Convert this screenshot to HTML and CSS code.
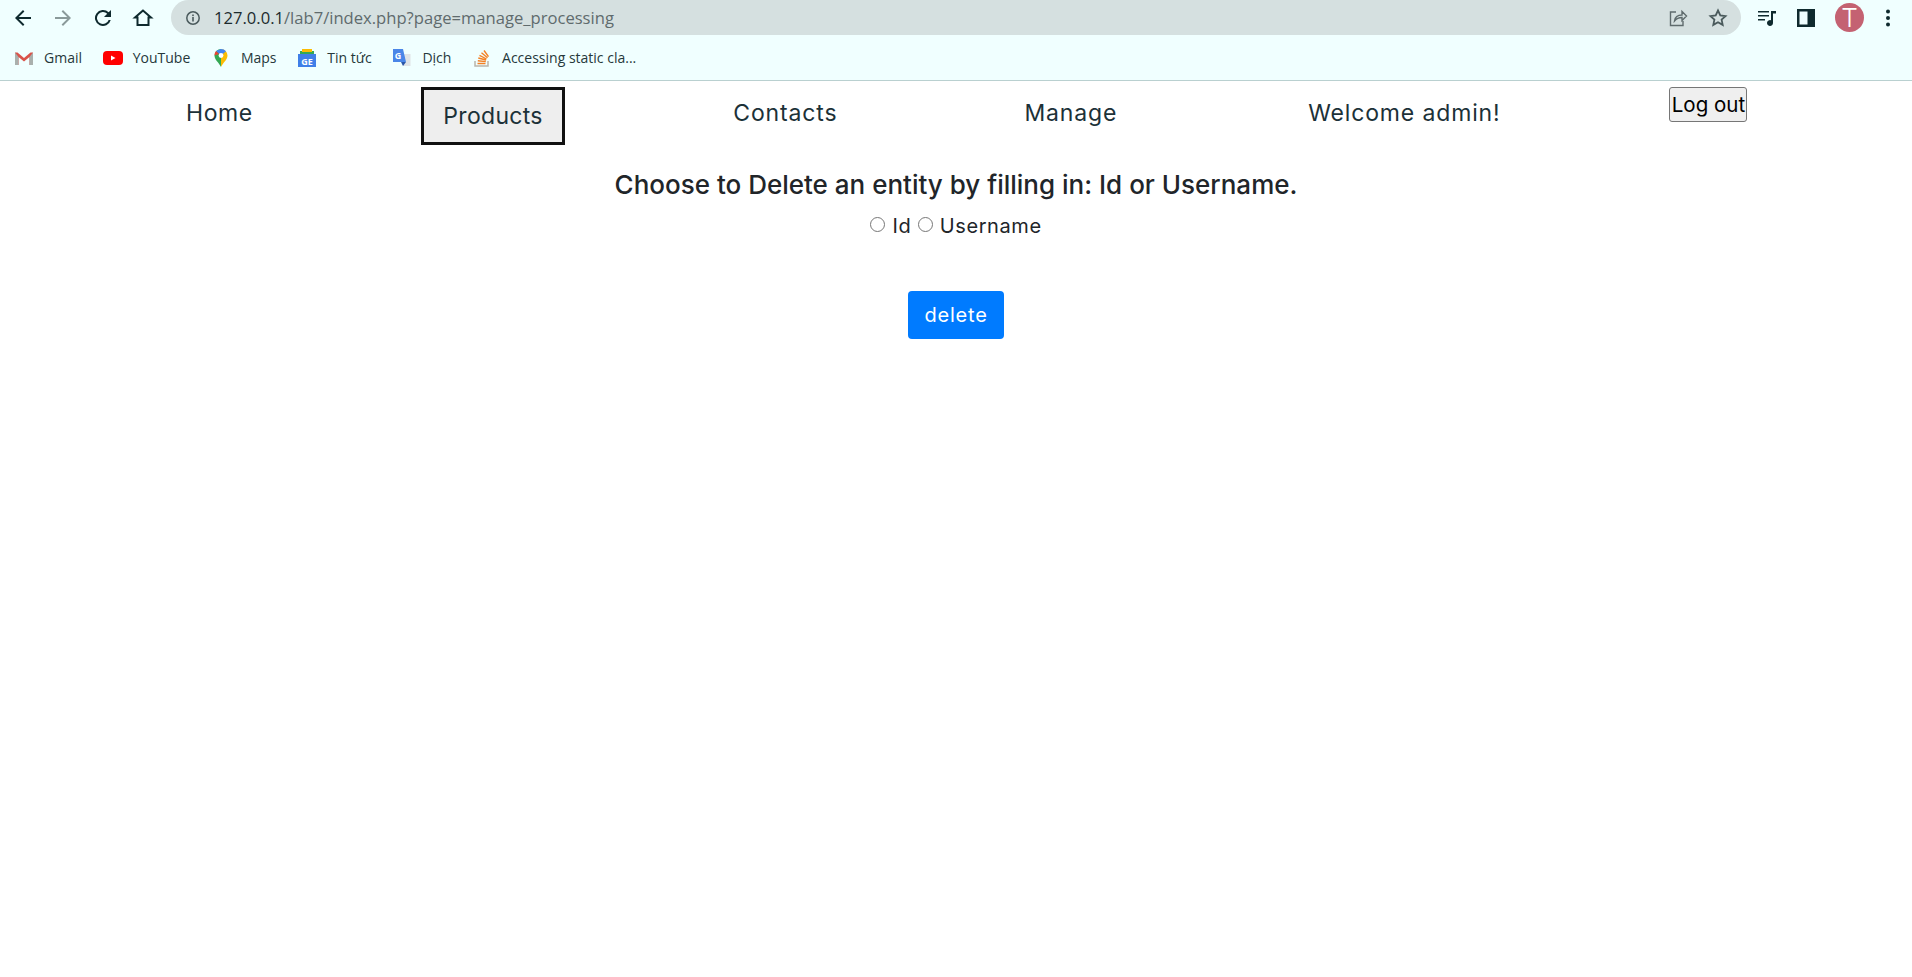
FILE: index.html
```html
<!DOCTYPE html>
<html lang="en">
<head>
  <meta charset="UTF-8" />
  <meta name="viewport" content="width=device-width, initial-scale=1.0" />
  <title>Manage</title>
  <link rel="stylesheet" href="styles.css">
</head>
<body>
  <div class="browser">
    <div class="toolbar">
      <div class="tool-btns">
        <svg class="tool-icon" viewBox="0 0 24 24"><path d="M20 11H7.800l5.600-5.600L12 4l-8 8 8 8 1.400-1.400L7.800 13H20z" fill="#0f2a2e"/></svg>
        <svg class="tool-icon" viewBox="0 0 24 24"><path d="M4 11h12.200l-5.600-5.600L12 4l8 8-8 8-1.400-1.400 5.600-5.600H4z" fill="#8a9a9a"/></svg>
        <svg class="tool-icon" viewBox="0 0 24 24"><path d="M17.650 6.350A8 8 0 1 0 19.730 14h-2.080a6 6 0 1 1-1.410-6.240L13 11h7V4z" fill="#0f2a2e"/></svg>
        <svg class="tool-icon" viewBox="0 0 24 24"><path d="M12 4.500 4 11.500h2.500V19h11v-7.500H20z" fill="none" stroke="#0f2a2e" stroke-width="2"/></svg>
      </div>
      <div class="omnibox">
        <svg class="info-icon" viewBox="0 0 16 16"><circle cx="8" cy="8" r="6.200" fill="none" stroke="#4a5a5c" stroke-width="1.500"/><rect x="7.200" y="7" width="1.600" height="4.500" fill="#4a5a5c"/><rect x="7.200" y="4.500" width="1.600" height="1.600" fill="#4a5a5c"/></svg>
        <span class="url"><span class="url-host">127.0.0.1</span>/lab7/index.php?page=manage_processing</span>
        <svg class="omni-icon share" viewBox="0 0 20 20"><path d="M8 4H2.500v13.500H15V13M6.500 13c.5-4 3.500-6 7.500-6V3.500L18.500 8 14 12.500V9.500c-3 0-5.500 1-7.500 3.500z" fill="none" stroke="#5f6b6d" stroke-width="1.400"/></svg>
        <svg class="omni-icon" viewBox="0 0 20 20"><path d="m10 2.500 2.300 5 5.200.6-3.900 3.500 1.100 5.300L10 14.200l-4.700 2.700 1.100-5.300-3.900-3.500 5.200-.6z" fill="none" stroke="#4a5a5c" stroke-width="1.800"/></svg>
      </div>
      <div class="ext-btns">
        <svg class="ext-icon" viewBox="0 0 20 20"><path d="M1 3h11v1.600H1zM1 7h11v1.600H1zM1 11h7v1.600H1zM14 3h5v2.500h-3V15a3 3 0 1 1-2-2.800z" fill="#0f2a2e"/></svg>
        <svg class="ext-icon" viewBox="0 0 20 20"><path d="M1 1h18v18H1zM3.500 3.500v13h8v-13z" fill="#0f2a2e" fill-rule="evenodd"/></svg>
        <span class="avatar">T</span>
        <svg class="menu-icon" viewBox="0 0 6 20"><circle cx="3" cy="3.500" r="2"/><circle cx="3" cy="10" r="2"/><circle cx="3" cy="16.500" r="2"/></svg>
      </div>
    </div>
    <div class="bookmarks">
      <a class="bookmark">
        <svg class="bm-icon" viewBox="0 0 20 16"><path d="M1 15V2.500h2.500L10 8l6.500-5.500H19V15h-3.500V7L10 11.500 4.500 7v8z" fill="#d9534a"/><path d="M1 2.500V15h3.500V7z" fill="#a9b0ad"/><path d="M19 2.500V15h-3.500V7z" fill="#a9b0ad"/></svg>
        Gmail
      </a>
      <a class="bookmark">
        <svg class="bm-icon" viewBox="0 0 20 16"><rect x="0" y="1" width="20" height="14" rx="4" fill="#f00"/><path d="M8 5.500v5l4.500-2.500z" fill="#fff"/></svg>
        YouTube
      </a>
      <a class="bookmark">
        <svg class="bm-icon" viewBox="0 0 20 20"><path d="M10 1a6.500 6.500 0 0 0-6.500 6.500C3.500 12 8 14.500 10 19z" fill="#34a853"/><path d="M10 1a6.500 6.500 0 0 1 6.500 6.500C16.500 12 12 14.500 10 19z" fill="#fbbc04"/><path d="M5 3 10 1a6.500 6.500 0 0 1 5 2.300L10 7.500z" fill="#4285f4"/><path d="M3.500 7.500A6.500 6.500 0 0 1 5 3l3 3z" fill="#ea4335"/><circle cx="10" cy="7.500" r="2.400" fill="#fff"/></svg>
        Maps
      </a>
      <a class="bookmark">
        <svg class="bm-icon" viewBox="0 0 20 20"><path d="M3 3h14v4H3z" fill="#34a853"/><path d="M5 1h10v3H5z" fill="#fbbc04"/><rect x="1" y="6" width="18" height="13" fill="#3f7fe8"/><text class="news-mark" x="10" y="16.500">GE</text></svg>
        Tin tức
      </a>
      <a class="bookmark">
        <svg class="bm-icon" viewBox="0 0 20 20"><path d="M9 6h9.500v12H11z" fill="#dfe3e6"/><path d="M1 1h10l3 13H1z" fill="#4a86e8"/><path d="M9 14h5l-3 4z" fill="#2a56a8"/><text class="translate-mark" x="6" y="10.500">G</text></svg>
        Dịch
      </a>
      <a class="bookmark">
        <svg class="bm-icon" viewBox="0 0 20 20"><path d="M3 13v5h13v-5" fill="none" stroke="#b9b5aa" stroke-width="1.500"/><path d="M5.500 15.500h8" stroke="#f48024" stroke-width="1.500"/><path d="m5.800 12.800 8 .8M6.300 10l7.800 2M7.500 7.400l7 3.600M9.500 4.800l6 5M12 2.500l4.500 6.200" stroke="#f48024" stroke-width="1.400"/></svg>
        Accessing static cla...
      </a>
    </div>
  </div>

  <nav class="nav">
    <a class="nav-link nav-home">Home</a>
    <a class="nav-link nav-active">Products</a>
    <a class="nav-link">Contacts</a>
    <a class="nav-link nav-manage">Manage</a>
    <a class="nav-link">Welcome admin!</a>
    <button class="logout" type="button">Log out</button>
  </nav>

  <main class="content">
    <h2 class="title">Choose to Delete an entity by filling in: Id or Username.</h2>
    <form class="delete-form">
      <div class="radio-row">
        <input type="radio" name="entity" id="byId" /> <label for="byId">Id</label>
        <input type="radio" name="entity" id="byName" /> <label for="byName">Username</label>
      </div>
      <button class="delete-btn" type="button">delete</button>
    </form>
  </main>
</body>
</html>
```

FILE: styles.css
```css
* {
  box-sizing: border-box;
}
body {
  margin: 0;
  font-family: 'Inter', 'Open Sans', sans-serif;
  background: white;
  color: #212529;
}
.browser {
  background: #f0ffff;
  border-bottom: 1px solid #b9d0d0;
  height: 81px;
}
.toolbar {
  display: flex;
  align-items: center;
  height: 35px;
  padding-left: 11px;
}
.tool-btns {
  display: flex;
  gap: 16px;
  width: 160px;
}
.tool-icon {
  width: 24px;
  height: 24px;
}
.omnibox {
  display: flex;
  align-items: center;
  width: 1570px;
  height: 35px;
  background: #d5e0e0;
  border-radius: 18px;
  padding: 0 13px 0 14px;
  font-family: 'Open Sans', sans-serif;
}
.info-icon {
  width: 16px;
  height: 16px;
  margin-right: 13px;
}
.url {
  flex: 1;
  font-size: 16.6px;
  color: #5f6b6d;
}
.url-host {
  color: #1c2b2e;
}
.omni-icon {
  width: 20px;
  height: 20px;
  margin-left: 20px;
}
.ext-btns {
  display: flex;
  align-items: center;
  margin-left: 16px;
  gap: 19px;
}
.ext-icon {
  width: 20px;
  height: 20px;
}
.avatar {
  width: 29px;
  height: 29px;
  border-radius: 50%;
  background: #c46272;
  color: white;
  font-size: 26px;
  line-height: 29px;
  text-align: center;
  font-weight: 300;
}
.menu-icon {
  width: 6px;
  height: 20px;
  fill: #0f2a2e;
  margin-left: 2px;
}
.bookmarks {
  display: flex;
  align-items: center;
  height: 45px;
  padding-left: 14px;
  gap: 20.7px;
  font-family: 'Open Sans', sans-serif;
  font-size: 14px;
  color: #26383b;
}
.bookmark {
  display: flex;
  align-items: center;
  gap: 10px;
}
.bm-icon {
  width: 20px;
  height: 20px;
}
.news-mark {
  font-size: 9px;
  font-weight: 700;
  fill: white;
  text-anchor: middle;
}
.translate-mark {
  font-size: 9px;
  font-weight: 700;
  fill: white;
  text-anchor: middle;
}
.nav {
  display: flex;
  align-items: flex-start;
  gap: 168px;
  padding: 6px 0 0 186px;
}
.nav-link {
  font-size: 23px;
  line-height: 40px;
  margin-top: 6px;
  color: #1c3138;
  letter-spacing: .85px;
  white-space: nowrap;
}
.nav-home {
  letter-spacing: .6px;
}
.nav-active {
  margin-top: 0;
  padding: 7px 19.5px;
  background: #eee;
  border: 3px solid #111;
  line-height: 38px;
  height: 58px;
  letter-spacing: .3px;
}
.nav-manage {
  margin-left: 19px;
  margin-right: 23px;
}
.logout {
  margin-left: 1px;
  font-family: inherit;
  font-size: 20.5px;
  height: 35px;
  width: 78px;
  padding: 0;
  color: black;
  background: #efefef;
  border: 1px solid #767676;
  border-radius: 3px;
}
.content {
  text-align: center;
  padding-top: 20px;
}
.title {
  margin: 0;
  font-size: 26px;
  font-weight: 500;
  line-height: 39px;
}
.radio-row {
  margin-top: 7px;
  font-size: 20px;
  line-height: 30px;
  height: 30px;
  letter-spacing: .6px;
}
.radio-row input {
  margin: 0 1px 0 0;
  width: 15px;
  height: 15px;
  vertical-align: 1px;
}
.delete-btn {
  display: block;
  margin: 50px auto 0;
  width: 96px;
  height: 48px;
  font-family: inherit;
  font-size: 20px;
  letter-spacing: .8px;
  color: white;
  background: #007bff;
  border: none;
  border-radius: 4px;
}
```
